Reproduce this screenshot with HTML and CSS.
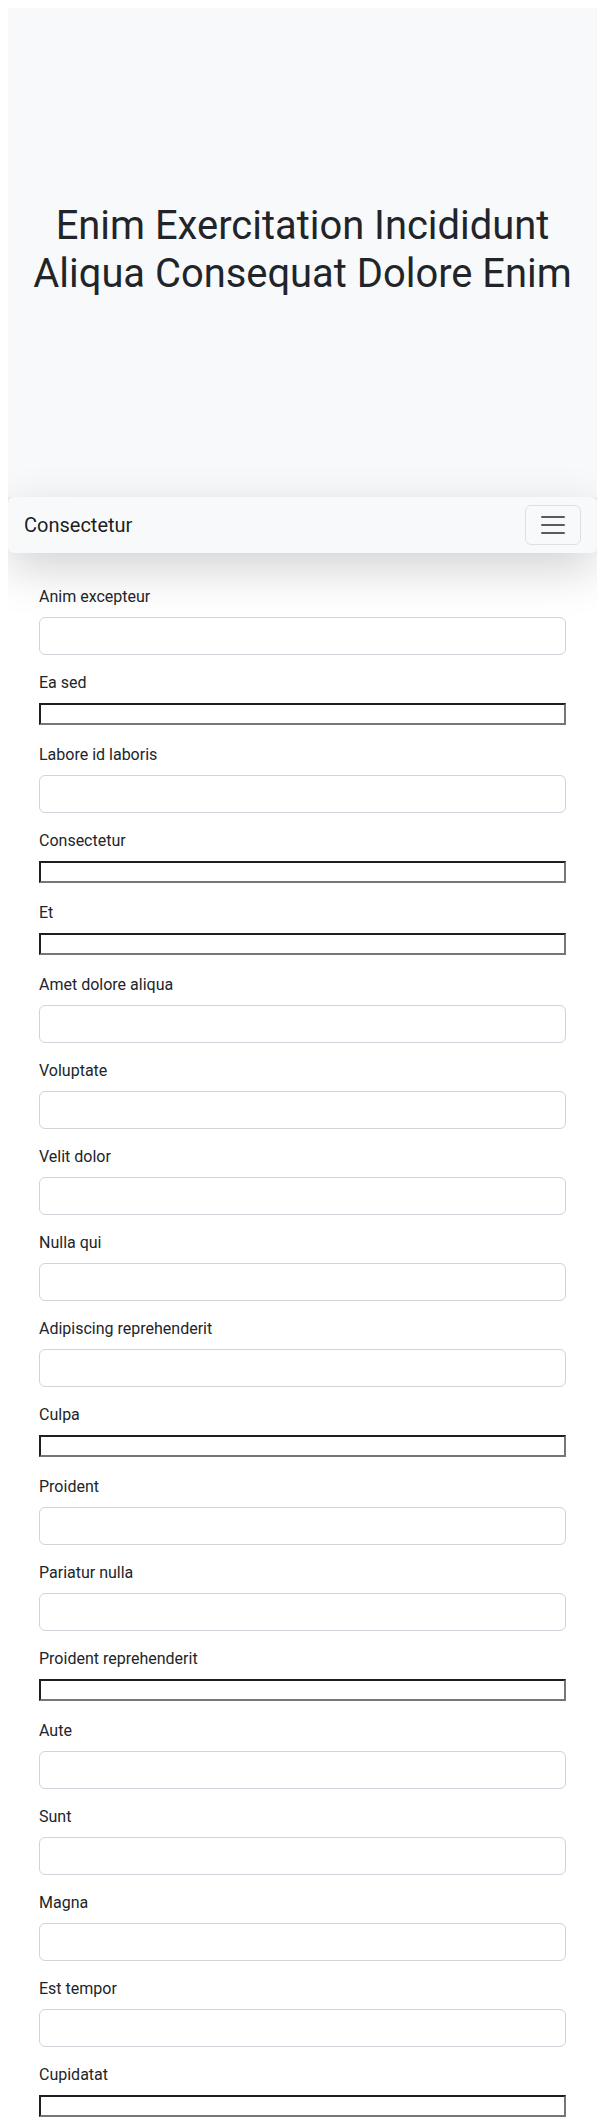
FILE: index.html
```html
<!DOCTYPE html>
<html lang="en">
<head>
<meta charset="utf-8">
<title>Form</title>
<link rel="stylesheet" href="styles.css">
</head>
<body>
<header class="hero">
  <h1 class="hero-title">Enim Exercitation Incididunt Aliqua Consequat Dolore Enim</h1>
</header>
<nav class="navbar">
  <span class="brand">Consectetur</span>
  <button class="toggler" type="button" aria-label="Toggle navigation">
    <svg class="toggler-icon" viewBox="0 0 30 30" width="30" height="30"><path d="M4 7h22M4 15h22M4 23h22" stroke="rgba(33,37,41,0.75)" stroke-width="2" stroke-linecap="round" stroke-miterlimit="10" fill="none"/></svg>
  </button>
</nav>
<main class="form-wrap">
  <div class="group"><label class="lbl">Anim excepteur</label><input class="field" type="text"></div>
  <div class="group"><label class="lbl">Ea sed</label><input class="raw" type="text"></div>
  <div class="group"><label class="lbl">Labore id laboris</label><input class="field" type="text"></div>
  <div class="group"><label class="lbl">Consectetur</label><input class="raw" type="text"></div>
  <div class="group"><label class="lbl">Et</label><input class="raw" type="text"></div>
  <div class="group"><label class="lbl">Amet dolore aliqua</label><input class="field" type="text"></div>
  <div class="group"><label class="lbl">Voluptate</label><input class="field" type="text"></div>
  <div class="group"><label class="lbl">Velit dolor</label><input class="field" type="text"></div>
  <div class="group"><label class="lbl">Nulla qui</label><input class="field" type="text"></div>
  <div class="group"><label class="lbl">Adipiscing reprehenderit</label><input class="field" type="text"></div>
  <div class="group"><label class="lbl">Culpa</label><input class="raw" type="text"></div>
  <div class="group"><label class="lbl">Proident</label><input class="field" type="text"></div>
  <div class="group"><label class="lbl">Pariatur nulla</label><input class="field" type="text"></div>
  <div class="group"><label class="lbl">Proident reprehenderit</label><input class="raw" type="text"></div>
  <div class="group"><label class="lbl">Aute</label><input class="field" type="text"></div>
  <div class="group"><label class="lbl">Sunt</label><input class="field" type="text"></div>
  <div class="group"><label class="lbl">Magna</label><input class="field" type="text"></div>
  <div class="group"><label class="lbl">Est tempor</label><input class="field" type="text"></div>
  <div class="group"><label class="lbl">Cupidatat</label><input class="raw" type="text"></div>
</main>
</body>
</html>
```
FILE: styles.css
```css
*, *::before, *::after { box-sizing: border-box; }

body {
  margin: 8px;
  font-family: Roboto, "Liberation Sans", Arial, sans-serif;
  font-size: 16px;
  line-height: 1.5;
  color: #212529;
  background: #fff;
}

.hero {
  height: 489px;
  background: #f8f9fa;
  box-shadow: 0 1rem 3rem rgba(0, 0, 0, 0.175);
  display: flex;
  align-items: center;
  justify-content: center;
  padding: 0 16px 6px;
}

.hero-title {
  margin: 0;
  font-size: 39.9px;
  font-weight: 400;
  line-height: 1.2;
  text-align: center;
}

.navbar {
  display: flex;
  align-items: center;
  justify-content: space-between;
  padding: 8px 16px;
  background: #f8f9fa;
  border-radius: 6px;
  box-shadow: 0 1rem 3rem rgba(0, 0, 0, 0.175);
}

.brand {
  font-size: 20px;
  line-height: 30px;
  padding: 5px 0;
  color: rgba(0, 0, 0, 0.9);
}

.toggler {
  display: flex;
  align-items: center;
  padding: 4px 12px;
  background: transparent;
  border: 1px solid rgba(0, 0, 0, 0.1);
  border-radius: 6px;
  line-height: 1;
}

.toggler-icon { display: block; width: 30px; height: 30px; }

.form-wrap {
  max-width: 527px;
  margin: 0 auto;
  padding-top: 32px;
}

.group {
  display: flex;
  flex-direction: column;
  align-items: stretch;
  margin-bottom: 16px;
}

.lbl {
  display: block;
  margin-bottom: 8px;
  line-height: 24px;
}

.field {
  display: block;
  width: 100%;
  height: 38px;
  padding: 6px 12px;
  font: inherit;
  color: #212529;
  background: #fff;
  border: 1px solid #ced4da;
  border-radius: 6px;
}

.raw {
  display: block;
  width: 100%;
  height: 22px;
  margin-bottom: 2px;
  padding: 1px 2px;
  background: #fff;
  border-style: solid;
  border-width: 2px;
  border-color: #1f1f1f #767676 #767676 #1f1f1f;
  border-radius: 0;
}
```
